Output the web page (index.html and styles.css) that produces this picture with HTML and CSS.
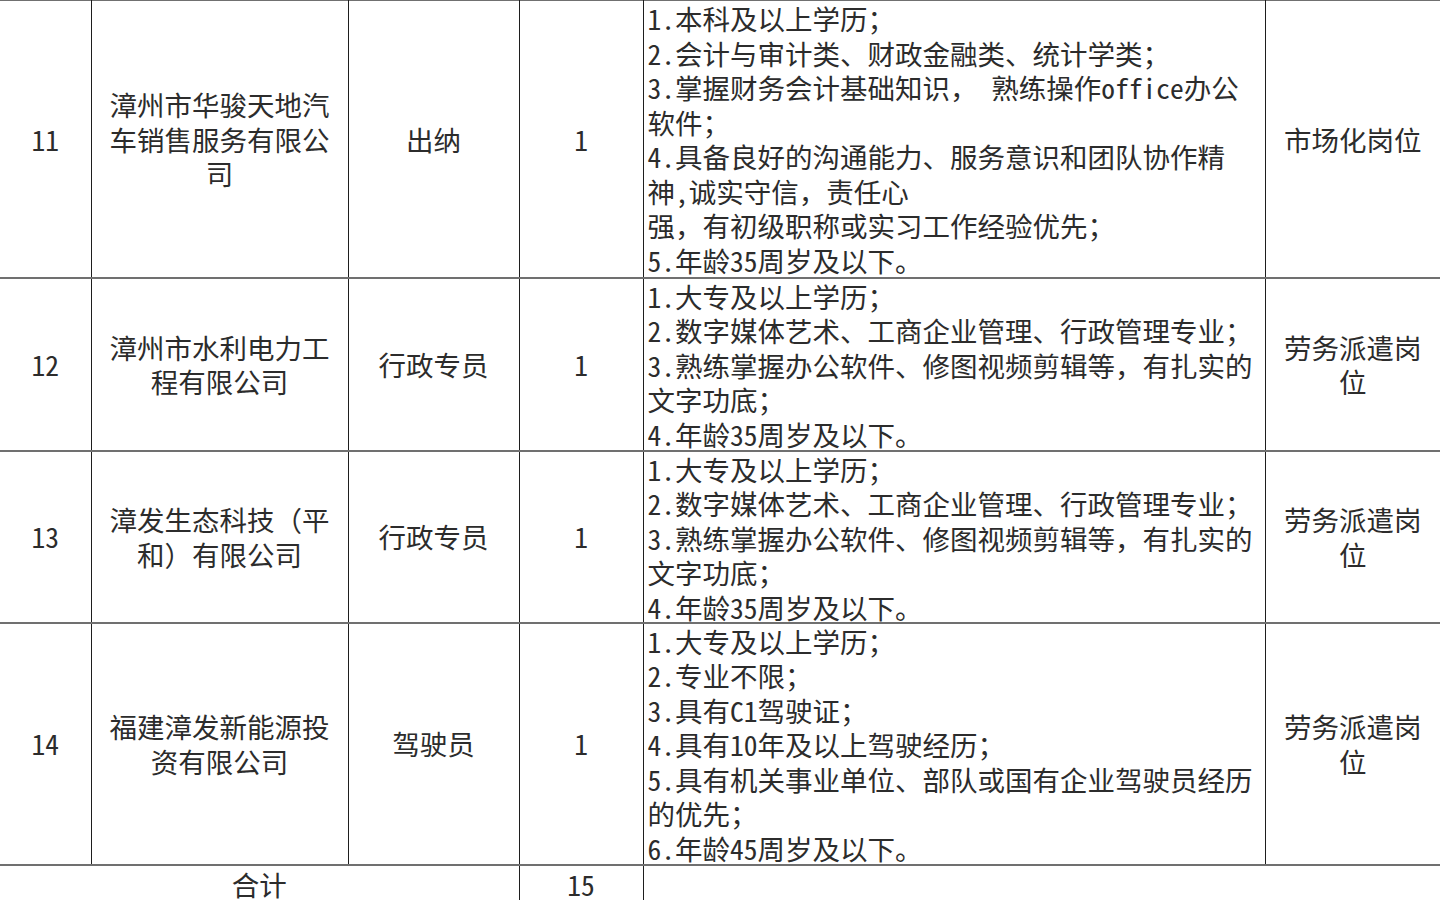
FILE: index.html
```html
<!DOCTYPE html>
<html lang="zh-CN">
<head>
<meta charset="utf-8">
<title>招聘岗位表</title>
<link rel="stylesheet" href="styles.css">
</head>
<body>
<table class="jobs">
  <colgroup>
    <col class="c-no">
    <col class="c-co">
    <col class="c-pos">
    <col class="c-num">
    <col class="c-req">
    <col class="c-type">
  </colgroup>
  <tbody>
    <tr class="r11">
      <td class="mid">11</td>
      <td class="mid"><div>漳州市华骏天地汽</div><div>车销售服务有限公</div><div>司</div></td>
      <td class="mid">出纳</td>
      <td class="mid">1</td>
      <td class="req">
        <div class="lines">
          <div>1.本科及以上学历；</div>
          <div>2.会计与审计类、财政金融类、统计学类；</div>
          <div>3.掌握财务会计基础知识， 熟练操作office办公</div>
          <div>软件；</div>
          <div>4.具备良好的沟通能力、服务意识和团队协作精</div>
          <div>神,诚实守信，责任心</div>
          <div>强，有初级职称或实习工作经验优先；</div>
          <div>5.年龄35周岁及以下。</div>
        </div>
      </td>
      <td class="mid">市场化岗位</td>
    </tr>
    <tr class="r12">
      <td class="mid">12</td>
      <td class="mid"><div>漳州市水利电力工</div><div>程有限公司</div></td>
      <td class="mid">行政专员</td>
      <td class="mid">1</td>
      <td class="req">
        <div class="lines">
          <div>1.大专及以上学历；</div>
          <div>2.数字媒体艺术、工商企业管理、行政管理专业；</div>
          <div>3.熟练掌握办公软件、修图视频剪辑等，有扎实的</div>
          <div>文字功底；</div>
          <div>4.年龄35周岁及以下。</div>
        </div>
      </td>
      <td class="mid"><div>劳务派遣岗</div><div>位</div></td>
    </tr>
    <tr class="r13">
      <td class="mid">13</td>
      <td class="mid"><div>漳发生态科技（平</div><div>和）有限公司</div></td>
      <td class="mid">行政专员</td>
      <td class="mid">1</td>
      <td class="req">
        <div class="lines">
          <div>1.大专及以上学历；</div>
          <div>2.数字媒体艺术、工商企业管理、行政管理专业；</div>
          <div>3.熟练掌握办公软件、修图视频剪辑等，有扎实的</div>
          <div>文字功底；</div>
          <div>4.年龄35周岁及以下。</div>
        </div>
      </td>
      <td class="mid"><div>劳务派遣岗</div><div>位</div></td>
    </tr>
    <tr class="r14">
      <td class="mid">14</td>
      <td class="mid"><div>福建漳发新能源投</div><div>资有限公司</div></td>
      <td class="mid">驾驶员</td>
      <td class="mid">1</td>
      <td class="req">
        <div class="lines">
          <div>1.大专及以上学历；</div>
          <div>2.专业不限；</div>
          <div>3.具有C1驾驶证；</div>
          <div>4.具有10年及以上驾驶经历；</div>
          <div>5.具有机关事业单位、部队或国有企业驾驶员经历</div>
          <div>的优先；</div>
          <div>6.年龄45周岁及以下。</div>
        </div>
      </td>
      <td class="mid"><div>劳务派遣岗</div><div>位</div></td>
    </tr>
    <tr class="total">
      <td class="mid" colspan="3">合计</td>
      <td class="mid">15</td>
      <td colspan="2" class="blank"></td>
    </tr>
  </tbody>
</table>
</body>
</html>
```

FILE: styles.css
```css
html, body {
  margin: 0;
  padding: 0;
  background: #ffffff;
}

body {
  width: 1440px;
  height: 900px;
  overflow: hidden;
  font-family: "Noto Sans Mono CJK SC", "Noto Sans CJK SC", "Liberation Sans", sans-serif;
  font-size: 27.5px;
  color: #2c2c2c;
}

.jobs {
  border-collapse: collapse;
  table-layout: fixed;
  width: 1440px;
}

.c-no { width: 91px; }
.c-co { width: 257px; }
.c-pos { width: 171px; }
.c-num { width: 124px; }
.c-req { width: 622px; }
.c-type { width: 175px; }

.jobs td {
  padding: 0;
  border-left: 1px solid #1e1e1e;
  border-right: 1px solid #1e1e1e;
  border-top: 2px solid #707070;
  border-bottom: 2px solid #707070;
  line-height: 34.5px;
  white-space: nowrap;
}

.jobs tr:first-child td {
  border-top: 1px solid #707070;
}

.jobs td:first-child {
  border-left: none;
}

.jobs td:last-child {
  border-right: none;
}

.mid {
  text-align: center;
  vertical-align: middle;
}

.req {
  text-align: left;
  vertical-align: top;
  padding-left: 4px !important;
}

.lines {
  height: 160px;
  overflow: visible;
}

.r11 { height: 277px; }
.r12 { height: 173px; }
.r13 { height: 172px; }
.r14 { height: 242px; }

.total td {
  height: 34px;
  line-height: 36px;
  vertical-align: top;
  border-bottom: 2px solid #1e1e1e;
}

.total .blank {
  border-right: none;
}
```
